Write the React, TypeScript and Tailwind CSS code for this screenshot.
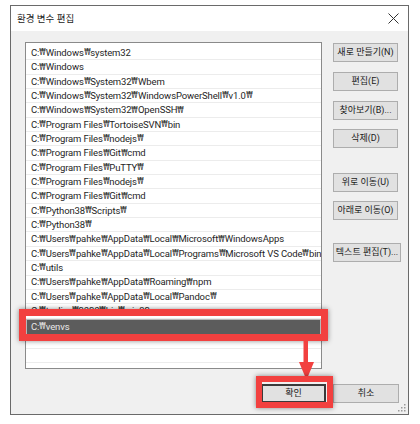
import React from "react";

const rows = [
  "C:₩Windows₩system32",
  "C:₩Windows",
  "C:₩Windows₩System32₩Wbem",
  "C:₩Windows₩System32₩WindowsPowerShell₩v1.0₩",
  "C:₩Windows₩System32₩OpenSSH₩",
  "C:₩Program Files₩TortoiseSVN₩bin",
  "C:₩Program Files₩nodejs₩",
  "C:₩Program Files₩Git₩cmd",
  "C:₩Program Files₩PuTTY₩",
  "C:₩Program Files₩nodejs₩",
  "C:₩Program Files₩Git₩cmd",
  "C:₩Python38₩Scripts₩",
  "C:₩Python38₩",
  "C:₩Users₩pahke₩AppData₩Local₩Microsoft₩WindowsApps",
  "C:₩Users₩pahke₩AppData₩Local₩Programs₩Microsoft VS Code₩bin",
  "C:₩utils",
  "C:₩Users₩pahke₩AppData₩Roaming₩npm",
  "C:₩Users₩pahke₩AppData₩Local₩Pandoc₩",
  "C:₩texlive₩2020₩bin₩win32",
];

function Won() {
  return (
    <span className="inline-flex w-[6.5px] justify-center">
      <span className="inline-block scale-x-[0.72]" style={{ fontFamily: '"DejaVu Sans", sans-serif', fontSize: "9px" }}>
        ₩
      </span>
    </span>
  );
}

function PathText({ text }: { text: string }) {
  const parts = text.split("₩");
  return (
    <>
      {parts.map((p, i) => (
        <React.Fragment key={i}>
          {i > 0 && <Won />}
          {p}
        </React.Fragment>
      ))}
    </>
  );
}

function Btn({ children, className = "" }: { children: React.ReactNode; className?: string }) {
  return (
    <div
      className={
        "h-[19px] flex items-center justify-center bg-[#e1e1e1] border border-[#adadad] text-[9px] text-[#1a1a1a] whitespace-nowrap leading-none " +
        className
      }
    >
      {children}
    </div>
  );
}

export default function App() {
  return (
    <div
      className="relative w-[420px] h-[424px] bg-white overflow-hidden pt-[5px] pl-[10px]"
      style={{ fontFamily: 'Roboto, "Noto Sans CJK KR", sans-serif' }}
    >
      <div className="w-[399px] h-[410px] border border-[#6a6a6a] flex flex-col">
        {/* title bar */}
        <div className="h-[25px] bg-white flex items-center justify-between pl-[6px] pr-[9px]">
          <span className="text-[9.5px] text-[#222] leading-none">환경 변수 편집</span>
          <svg width="11" height="11" viewBox="0 0 11 11">
            <path d="M0.5 0.5 L10.5 10.5 M10.5 0.5 L0.5 10.5" stroke="#333" strokeWidth="1" />
          </svg>
        </div>
        {/* body */}
        <div className="flex-1 bg-[#f0f0f0] relative">
          <div className="flex pt-[11px] pl-[14px] gap-[11px]">
            <div className="w-[297px] h-[327px] border border-[#8a8a8a] bg-white overflow-hidden pt-[3px]">
              {rows.map((r, i) => (
                <div
                  key={i}
                  className="h-[14.35px] border-b border-[#ececec] pl-[5px] flex items-center text-[9.5px] tracking-[-0.12px] text-[#1e1e1e] whitespace-nowrap leading-none"
                >
                  <PathText text={r} />
                </div>
              ))}
              <div className="h-[16px] bg-[#5c5c5c] border border-[#b8b8b8] pl-[4px] flex items-center text-[9.5px] tracking-[-0.12px] text-[#e8e8e8] leading-none">
                <PathText text="C:₩venvs" />
              </div>
              <div className="h-[14.4px] border-b border-[#ececec]" />
              <div className="h-[14.4px] border-b border-[#ececec]" />
              <div className="h-[14.4px] border-b border-[#ececec]" />
            </div>
            <div className="flex flex-col w-[65px] pt-[1px]">
              <Btn>새로 만들기(N)</Btn>
              <Btn className="mt-[10px]">편집(E)</Btn>
              <Btn className="mt-[10px]">찾아보기(B)...</Btn>
              <Btn className="mt-[9px]">삭제(D)</Btn>
              <Btn className="mt-[25px]">위로 이동(U)</Btn>
              <Btn className="mt-[9px]">아래로 이동(O)</Btn>
              <Btn className="mt-[23px] w-[68px]">텍스트 편집(T)...</Btn>
            </div>
          </div>
          <div className="flex justify-end gap-[7px] mt-[15px] pr-[9px]">
            <div className="w-[65px] h-[19px] flex items-center justify-center bg-[#e1e1e1] border-2 border-[#3a3a3a] text-[9px] text-[#1a1a1a] leading-none">
              확인
            </div>
            <div className="w-[66px] h-[19px] flex items-center justify-center bg-[#e1e1e1] border border-[#adadad] text-[9px] text-[#1a1a1a] leading-none">
              취소
            </div>
          </div>
          {/* resize grip */}
          <svg className="absolute right-[2px] bottom-[2px]" width="8" height="8" viewBox="0 0 8 8">
            <rect x="6" y="0" width="1.5" height="1.5" fill="#9a9a9a" />
            <rect x="3" y="3" width="1.5" height="1.5" fill="#9a9a9a" />
            <rect x="6" y="3" width="1.5" height="1.5" fill="#9a9a9a" />
            <rect x="0" y="6" width="1.5" height="1.5" fill="#9a9a9a" />
            <rect x="3" y="6" width="1.5" height="1.5" fill="#9a9a9a" />
            <rect x="6" y="6" width="1.5" height="1.5" fill="#9a9a9a" />
          </svg>
        </div>
      </div>

      {/* annotation overlays */}
      <div className="absolute left-[19px] top-[309px] w-[309px] h-[32px] border-[7px] border-[#f2403f] shadow-[0_0_5px_rgba(0,0,0,0.45)]" />
      <svg className="absolute left-[298px] top-[340px]" width="20" height="42" viewBox="0 0 20 42">
        <rect x="5.5" y="0" width="4.5" height="24" fill="#f2403f" />
        <path d="M1 22 L16 22 L8.5 40 Z" fill="#f2403f" />
      </svg>
      <div className="absolute left-[256px] top-[376px] w-[77px] h-[32px] border-[6px] border-[#f2403f] shadow-[0_0_5px_rgba(0,0,0,0.45)]" />
    </div>
  );
}
